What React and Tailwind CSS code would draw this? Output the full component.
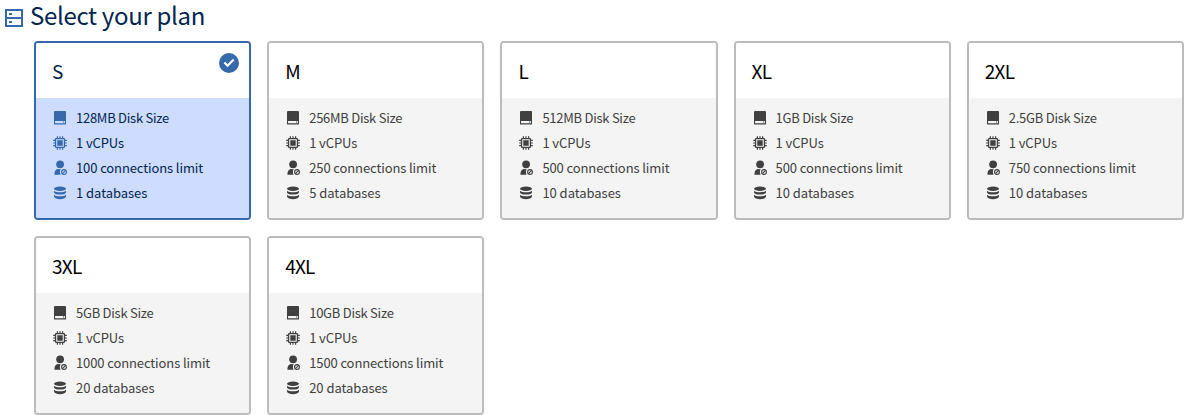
const plans = [
  { name: 'S', disk: '128MB', connections: 100, databases: 1 },
  { name: 'M', disk: '256MB', connections: 250, databases: 5 },
  { name: 'L', disk: '512MB', connections: 500, databases: 10 },
  { name: 'XL', disk: '1GB', connections: 500, databases: 10 },
  { name: '2XL', disk: '2.5GB', connections: 750, databases: 10 },
  { name: '3XL', disk: '5GB', connections: 1000, databases: 20 },
  { name: '4XL', disk: '10GB', connections: 1500, databases: 20 },
];

function DiskIcon() {
  return (
    <svg viewBox="0 0 14 14" className="size-3.5 shrink-0" fill="currentColor">
      <path fillRule="evenodd" d="M1 0h10a1 1 0 0 1 1 1V13a.5.5 0 0 1-.5.5H.5A.5.5 0 0 1 0 13V1a1 1 0 0 1 1-1ZM1.100 10v2.300h9.800V10ZM9 10.600h1v1H9Z" transform="translate(1 0)" />
    </svg>
  );
}

function CpuIcon() {
  return (
    <svg viewBox="0 0 14 14" className="size-3.5 shrink-0" fill="currentColor">
      <path fillRule="evenodd" d="M3.300 1.900h7.400a1.400 1.400 0 0 1 1.400 1.400v7.400a1.400 1.400 0 0 1-1.400 1.400H3.300a1.400 1.400 0 0 1-1.400-1.400V3.300a1.400 1.400 0 0 1 1.400-1.400ZM3.200 3.200v7.600h7.600V3.200Z" />
      <path d="M4.300 4.300h5.400v5.400H4.300ZM3.800.2H5V2H3.800ZM6.400.2h1.200V2H6.400ZM9 .2h1.200V2H9ZM3.800 12H5v1.800H3.800ZM6.400 12h1.200v1.800H6.400ZM9 12h1.200v1.800H9ZM.2 3.800H2V5H.2ZM.2 6.400H2v1.200H.2ZM.2 9H2v1.200H.2ZM12 3.800h1.800V5H12ZM12 6.400h1.800v1.200H12ZM12 9h1.800v1.200H12Z" />
    </svg>
  );
}

function UserIcon() {
  return (
    <svg viewBox="0 0 14 14" className="size-3.5 shrink-0 overflow-visible" fill="currentColor">
      <ellipse cx="7.100" cy="3.300" rx="3.900" ry="3.900" />
      <path d="M4.600 8.100 7.700 8.300C6.600 10 6.600 12 7.600 13.700H1.400c0-2.800.8-5 3.200-5.600Z" />
      <circle cx="11" cy="11" r="2.400" fill="none" stroke="currentColor" strokeWidth="1.100" />
      <path d="m9.400 12.600 3.200-3.200" stroke="currentColor" strokeWidth="1.100" />
    </svg>
  );
}

function DatabaseIcon() {
  return (
    <svg viewBox="0 0 14 14" className="size-3.5 shrink-0" fill="currentColor">
      <ellipse cx="7" cy="2.700" rx="6" ry="2.200" />
      <path d="M1 4.700C2.900 6.700 11.100 6.700 13 4.700V6.400C12 9.300 2 9.300 1 6.400ZM1 8.700C2.900 10.800 11.100 10.800 13 8.700V10.500C12 14.200 2 14.200 1 10.500Z" />
    </svg>
  );
}

function Feature({ icon, children, tracking = 'tracking-[-0.11px]' }) {
  return (
    <li className="flex h-[25px] items-center gap-[9px]">
      {icon}
      <span className={`whitespace-nowrap ${tracking}`}>{children}</span>
    </li>
  );
}

function PlanCard({ plan, selected }) {
  return (
    <article className={`h-[179px] overflow-hidden rounded border-2 ${selected ? 'border-[#3569ab] text-[#00254f]' : 'border-[#bcbcbc] text-black'}`}>
      <header className="flex h-[55px] items-start justify-between bg-white pl-4 pr-2.5">
        <h2 className="pt-4 text-[19px] leading-6 tracking-[-0.75px]">{plan.name}</h2>
        {selected && (
          <svg viewBox="0 0 20 20" className="mt-2.5 size-5">
            <circle cx="10" cy="10" r="10" fill="#3569ab" />
            <path d="m5.400 9.500 3.200 3.200 6.100-6.300" fill="none" stroke="#fff" strokeWidth="2.200" />
          </svg>
        )}
      </header>
      <ul className={`h-[120px] px-[17px] pt-[7px] text-[13px] leading-5 ${selected ? 'bg-[#cddcff] text-[#3569ab] [&_span]:text-[#00254f]' : 'bg-[#f4f4f4] text-[#404040]'}`}>
        <Feature icon={<DiskIcon />} tracking="tracking-[-0.26px]">{plan.disk} Disk Size</Feature>
        <Feature icon={<CpuIcon />}>1 vCPUs</Feature>
        <Feature icon={<UserIcon />}>{plan.connections} connections limit</Feature>
        <Feature icon={<DatabaseIcon />} tracking="tracking-[-0.04px]">{plan.databases} databases</Feature>
      </ul>
    </article>
  );
}

export default function App() {
  return (
    <main className="h-[415px] bg-white font-['Noto_Sans_CJK_SC',sans-serif]">
      <div className="flex h-[41px] items-start pl-[5px]">
        <svg viewBox="0 0 18 18" className="mt-[9px] size-[18px]" fill="none" stroke="#3569ab" strokeWidth="2">
          <path d="M1 1h16v16H1ZM1 9h16" />
          <path d="M4 5h3M4 13h3" />
        </svg>
        <h1 className="ml-[7px] text-[24px] leading-[30px] tracking-[-0.32px] text-[#00254f]">Select your plan</h1>
      </div>
      <section className="grid grid-cols-5 gap-4 pl-[34px]">
        {plans.map((plan) => (
          <PlanCard key={plan.name} plan={plan} selected={plan.name === 'S'} />
        ))}
      </section>
    </main>
  );
}
